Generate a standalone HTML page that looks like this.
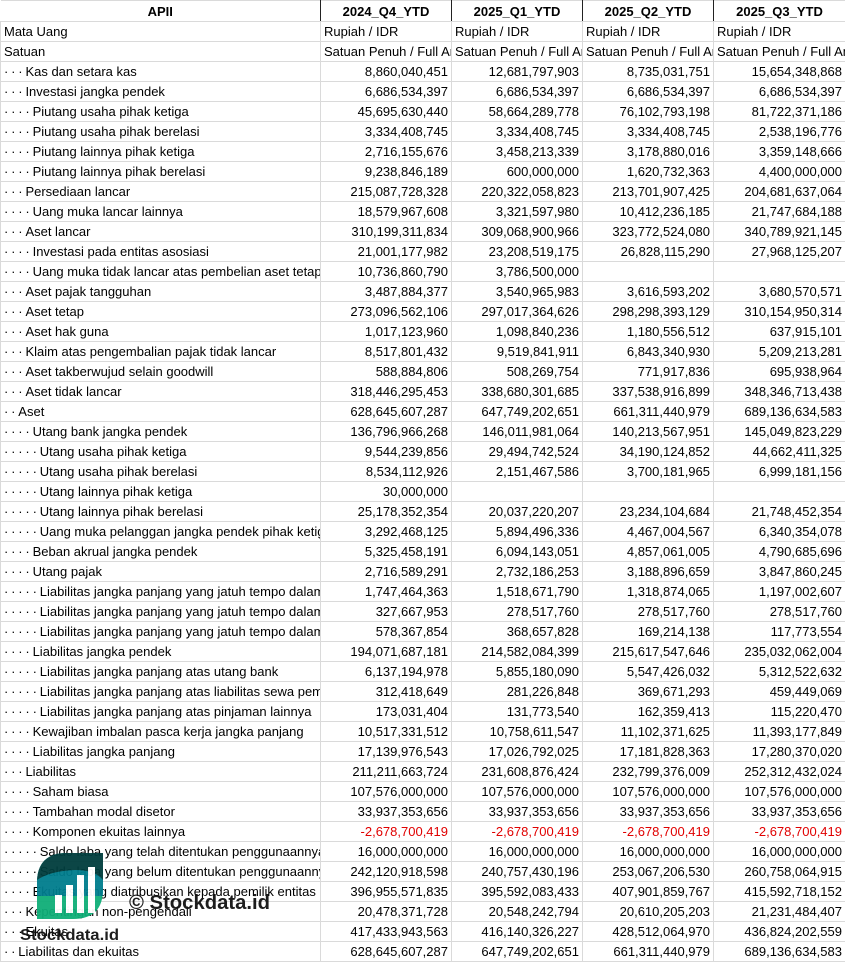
<!DOCTYPE html>
<html><head><meta charset="utf-8"><style>
body{margin:0;width:845px;height:961px;overflow:hidden;background:#fff;font-family:"Liberation Sans",sans-serif;font-size:13px;color:#000;position:relative}
table{border-collapse:collapse;table-layout:fixed;width:845px}
td{height:19px;padding:0 3px;border:1px solid #dadada;white-space:nowrap;overflow:hidden;line-height:19px}
td.n{text-align:right}
tr.h td{height:20px;font-weight:bold;text-align:center;border:1px solid #dadada;border-left:1px solid #222;border-right:1px solid #222}
tr.h td:first-child{border-left:none}
.r{color:#e00000}
.dt{letter-spacing:-0.4px}
.wm{position:absolute;left:0;top:0}
</style></head><body>
<table>
<colgroup><col style="width:320px"><col style="width:131px"><col style="width:131px"><col style="width:131px"><col style="width:132px"></colgroup>
<tr class="h"><td>APII</td><td>2024_Q4_YTD</td><td>2025_Q1_YTD</td><td>2025_Q2_YTD</td><td>2025_Q3_YTD</td></tr>
<tr><td>Mata Uang</td><td>Rupiah / IDR</td><td>Rupiah / IDR</td><td>Rupiah / IDR</td><td>Rupiah / IDR</td></tr>
<tr><td>Satuan</td><td>Satuan Penuh / Full Amount</td><td>Satuan Penuh / Full Amount</td><td>Satuan Penuh / Full Amount</td><td>Satuan Penuh / Full Amount</td></tr>
<tbody id="b"></tbody>
</table>
<script>
var d=[
[3,"Kas dan setara kas","8,860,040,451","12,681,797,903","8,735,031,751","15,654,348,868"],
[3,"Investasi jangka pendek","6,686,534,397","6,686,534,397","6,686,534,397","6,686,534,397"],
[4,"Piutang usaha pihak ketiga","45,695,630,440","58,664,289,778","76,102,793,198","81,722,371,186"],
[4,"Piutang usaha pihak berelasi","3,334,408,745","3,334,408,745","3,334,408,745","2,538,196,776"],
[4,"Piutang lainnya pihak ketiga","2,716,155,676","3,458,213,339","3,178,880,016","3,359,148,666"],
[4,"Piutang lainnya pihak berelasi","9,238,846,189","600,000,000","1,620,732,363","4,400,000,000"],
[3,"Persediaan lancar","215,087,728,328","220,322,058,823","213,701,907,425","204,681,637,064"],
[4,"Uang muka lancar lainnya","18,579,967,608","3,321,597,980","10,412,236,185","21,747,684,188"],
[3,"Aset lancar","310,199,311,834","309,068,900,966","323,772,524,080","340,789,921,145"],
[4,"Investasi pada entitas asosiasi","21,001,177,982","23,208,519,175","26,828,115,290","27,968,125,207"],
[4,"Uang muka tidak lancar atas pembelian aset tetap","10,736,860,790","3,786,500,000","",""],
[3,"Aset pajak tangguhan","3,487,884,377","3,540,965,983","3,616,593,202","3,680,570,571"],
[3,"Aset tetap","273,096,562,106","297,017,364,626","298,298,393,129","310,154,950,314"],
[3,"Aset hak guna","1,017,123,960","1,098,840,236","1,180,556,512","637,915,101"],
[3,"Klaim atas pengembalian pajak tidak lancar","8,517,801,432","9,519,841,911","6,843,340,930","5,209,213,281"],
[3,"Aset takberwujud selain goodwill","588,884,806","508,269,754","771,917,836","695,938,964"],
[3,"Aset tidak lancar","318,446,295,453","338,680,301,685","337,538,916,899","348,346,713,438"],
[2,"Aset","628,645,607,287","647,749,202,651","661,311,440,979","689,136,634,583"],
[4,"Utang bank jangka pendek","136,796,966,268","146,011,981,064","140,213,567,951","145,049,823,229"],
[5,"Utang usaha pihak ketiga","9,544,239,856","29,494,742,524","34,190,124,852","44,662,411,325"],
[5,"Utang usaha pihak berelasi","8,534,112,926","2,151,467,586","3,700,181,965","6,999,181,156"],
[5,"Utang lainnya pihak ketiga","30,000,000","","",""],
[5,"Utang lainnya pihak berelasi","25,178,352,354","20,037,220,207","23,234,104,684","21,748,452,354"],
[5,"Uang muka pelanggan jangka pendek pihak ketiga","3,292,468,125","5,894,496,336","4,467,004,567","6,340,354,078"],
[4,"Beban akrual jangka pendek","5,325,458,191","6,094,143,051","4,857,061,005","4,790,685,696"],
[4,"Utang pajak","2,716,589,291","2,732,186,253","3,188,896,659","3,847,860,245"],
[5,"Liabilitas jangka panjang yang jatuh tempo dalam satu tahun","1,747,464,363","1,518,671,790","1,318,874,065","1,197,002,607"],
[5,"Liabilitas jangka panjang yang jatuh tempo dalam satu tahun","327,667,953","278,517,760","278,517,760","278,517,760"],
[5,"Liabilitas jangka panjang yang jatuh tempo dalam satu tahun","578,367,854","368,657,828","169,214,138","117,773,554"],
[4,"Liabilitas jangka pendek","194,071,687,181","214,582,084,399","215,617,547,646","235,032,062,004"],
[5,"Liabilitas jangka panjang atas utang bank","6,137,194,978","5,855,180,090","5,547,426,032","5,312,522,632"],
[5,"Liabilitas jangka panjang atas liabilitas sewa pembiayaan","312,418,649","281,226,848","369,671,293","459,449,069"],
[5,"Liabilitas jangka panjang atas pinjaman lainnya","173,031,404","131,773,540","162,359,413","115,220,470"],
[4,"Kewajiban imbalan pasca kerja jangka panjang","10,517,331,512","10,758,611,547","11,102,371,625","11,393,177,849"],
[4,"Liabilitas jangka panjang","17,139,976,543","17,026,792,025","17,181,828,363","17,280,370,020"],
[3,"Liabilitas","211,211,663,724","231,608,876,424","232,799,376,009","252,312,432,024"],
[4,"Saham biasa","107,576,000,000","107,576,000,000","107,576,000,000","107,576,000,000"],
[4,"Tambahan modal disetor","33,937,353,656","33,937,353,656","33,937,353,656","33,937,353,656"],
[4,"Komponen ekuitas lainnya","-2,678,700,419","-2,678,700,419","-2,678,700,419","-2,678,700,419"],
[5,"Saldo laba yang telah ditentukan penggunaannya","16,000,000,000","16,000,000,000","16,000,000,000","16,000,000,000"],
[5,"Saldo laba yang belum ditentukan penggunaannya","242,120,918,598","240,757,430,196","253,067,206,530","260,758,064,915"],
[4,"Ekuitas yang diatribusikan kepada pemilik entitas induk","396,955,571,835","395,592,083,433","407,901,859,767","415,592,718,152"],
[3,"Kepentingan non-pengendali","20,478,371,728","20,548,242,794","20,610,205,203","21,231,484,407"],
[3,"Ekuitas","417,433,943,563","416,140,326,227","428,512,064,970","436,824,202,559"],
[2,"Liabilitas dan ekuitas","628,645,607,287","647,749,202,651","661,311,440,979","689,136,634,583"]];
var h="";d.forEach(function(r){var dots=new Array(r[0]+1).join("· ");h+='<tr><td><span class="dt">'+dots+"</span>"+r[1]+"</td>";for(var i=2;i<6;i++){h+='<td class="n'+(r[i].charAt(0)=="-"?" r":"")+'">'+r[i]+"</td>";}h+="</tr>";});
document.getElementById("b").innerHTML=h;
</script>
<svg class="wm" width="845" height="961" style="opacity:0.95">
<defs><clipPath id="c"><path d="M37 919 V883 Q37 853 67 853 H103 V889 Q103 919 73 919 Z"/></clipPath></defs>
<g clip-path="url(#c)">
<rect x="37" y="853" width="66" height="66" fill="#0fae78"/>
<path d="M37 853 H103 V896 L37 896 Z" fill="#007d8d"/>
<path d="M37 853 H103 V880 Q95 870 75 870 Q50 871 37 880 Z" fill="#003d3d"/>
<path d="M95 880 Q106 888 103 896 L95 896 Z" fill="#007d8d"/>
</g>
<rect x="55" y="895" width="7" height="18" fill="#fff"/>
<rect x="66" y="885" width="7" height="28" fill="#fff"/>
<rect x="77" y="875" width="7" height="38" fill="#fff"/>
<rect x="88" y="867" width="7" height="46" fill="#fff"/>
<text x="129" y="909" font-family="Liberation Sans,sans-serif" font-size="20" font-weight="bold" fill="#111" textLength="141" lengthAdjust="spacingAndGlyphs">© Stockdata.id</text>
<text x="20" y="940" font-family="Liberation Sans,sans-serif" font-size="16" font-weight="bold" fill="#111" textLength="99" lengthAdjust="spacingAndGlyphs">Stockdata.id</text>
</svg>
</body></html>
